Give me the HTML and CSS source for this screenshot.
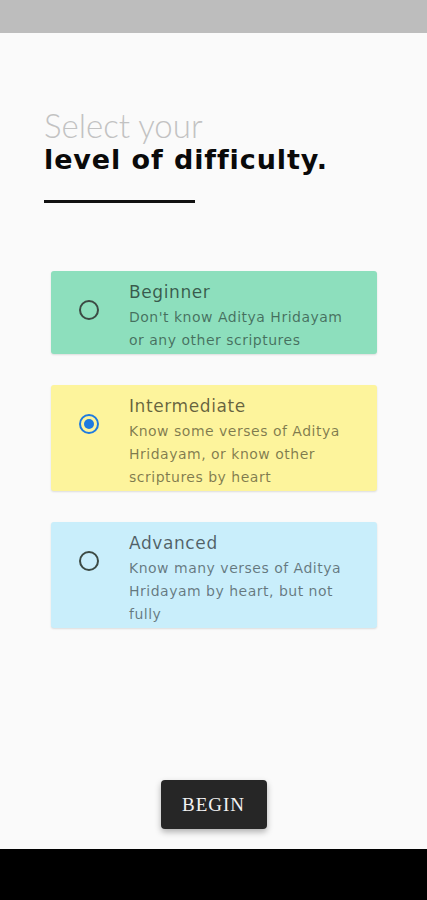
FILE: index.html
```html
<!DOCTYPE html>
<html>
<head>
<meta charset="utf-8">
<link rel="stylesheet" href="styles.css">
</head>
<body>
<div class="screen">
  <div class="status-bar"></div>
  <main class="content">
    <h1 class="heading">
      <span class="heading-light">Select your</span>
      <span class="heading-bold">level of difficulty.</span>
    </h1>
    <div class="rule"></div>
    <div class="options">
      <div class="card card-green">
        <span class="radio"></span>
        <div class="card-text">
          <div class="card-title">Beginner</div>
          <div class="card-desc">Don't know Aditya Hridayam or any other scriptures</div>
        </div>
      </div>
      <div class="card card-yellow">
        <span class="radio radio-on"></span>
        <div class="card-text">
          <div class="card-title">Intermediate</div>
          <div class="card-desc">Know some verses of Aditya Hridayam, or know other scriptures by heart</div>
        </div>
      </div>
      <div class="card card-blue">
        <span class="radio"></span>
        <div class="card-text">
          <div class="card-title">Advanced</div>
          <div class="card-desc">Know many verses of Aditya Hridayam by heart, but not fully</div>
        </div>
      </div>
    </div>
    <div class="spacer"></div>
    <div class="actions">
      <button class="begin">BEGIN</button>
    </div>
  </main>
  <div class="nav-bar"></div>
</div>
</body>
</html>
```

FILE: styles.css
```css
* { box-sizing: border-box; }
html, body { margin: 0; padding: 0; }
body { background: #fafafa; font-family: "DejaVu Sans", "Noto Sans", sans-serif; }
.screen { width: 427px; height: 900px; display: flex; flex-direction: column; }
.status-bar { height: 33px; background: #bdbdbd; flex: none; }
.nav-bar { height: 51px; background: #000; flex: none; }
.content { flex: 1; display: flex; flex-direction: column; padding: 0 0 0 44px; }
.heading { margin: 74px 0 0; display: flex; flex-direction: column; }
.heading-light { font-family: Lato, sans-serif; font-weight: 300; font-size: 33px; line-height: 36px; color: #c2c2c2; letter-spacing: 0px; }
.heading-bold { font-family: "DejaVu Sans", sans-serif; font-weight: 700; font-size: 27px; line-height: 34px; color: #0a0a0a; letter-spacing: 0.9px; }
.rule { width: 151px; height: 3px; background: #111; margin-top: 23px; }
.options { display: flex; flex-direction: column; gap: 31px; margin: 68px 0 0 7px; width: 326px; }
.card { display: flex; align-items: flex-start; border-radius: 3px; padding: 10px 24px 2px 28px; box-shadow: 0 1px 2px rgba(0,0,0,0.12); }
.card-green { background: #8ddfbd; }
.card-yellow { background: #fdf49c; }
.card-blue { background: #c9eefb; }
.radio { flex: none; width: 20px; height: 20px; border-radius: 50%; border: 2px solid #3c4a44; margin-top: 19px; margin-right: 30px; position: relative; }
.radio-on { border-color: #1e7be0; }
.radio-on::after { content: ""; position: absolute; left: 3px; top: 3px; width: 10px; height: 10px; border-radius: 50%; background: #1e7be0; }
.card-text { flex: 1; }
.card-title { font-size: 17px; line-height: 22px; color: rgba(0,0,0,0.6); letter-spacing: 0.6px; }
.card-desc { font-size: 14px; line-height: 23px; margin-top: 3px; color: rgba(0,0,0,0.5); letter-spacing: 0.5px; }
.spacer { flex: 1; }
.actions { display: flex; justify-content: center; padding-right: 44px; margin-bottom: 20px; }
.begin { width: 106px; height: 49px; background: #262626; color: #f2f2f2; border: none; border-radius: 4px; font-family: "Liberation Serif", serif; font-size: 19px; letter-spacing: 1px; box-shadow: 0 3px 6px rgba(0,0,0,0.3); }
```
